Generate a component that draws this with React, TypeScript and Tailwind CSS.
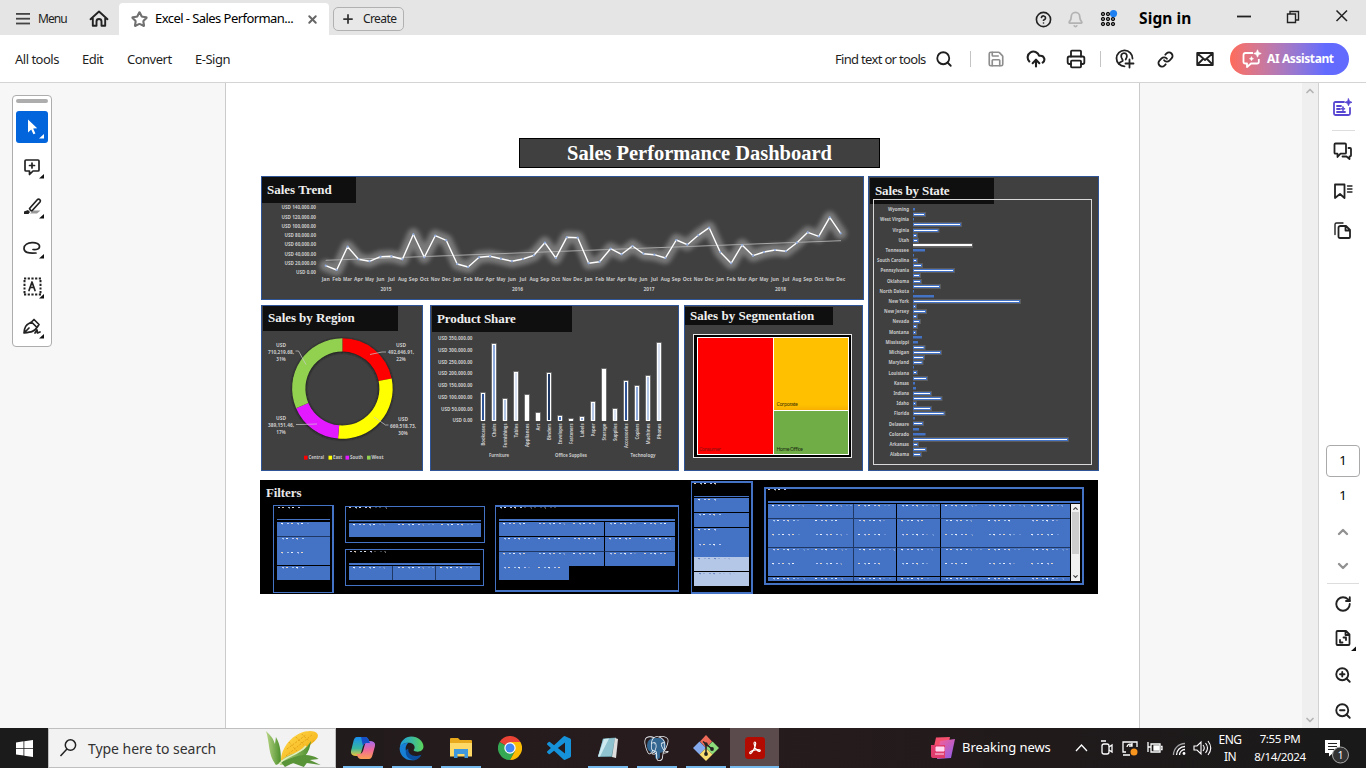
import React from "react";
import {
  Star, X, Plus, CircleHelp, Bell, Search, Save, CloudUpload, Printer, Link, ChevronUp, ChevronDown,
  ZoomIn, ZoomOut, RotateCw,
} from "lucide-react";
import { SiPostgresql } from "react-icons/si";

const UI = "font-['Noto_Sans',sans-serif]";
const SERIF = "font-['Liberation_Serif',serif] font-bold";

/* ------------------------------------------------ window chrome */

function AppsGrid() {
  const dots = [0, 1, 2].flatMap((r) => [0, 1, 2].map((c) => [c, r]));
  return (
    <svg width="18" height="18" viewBox="0 0 18 18">
      {dots.map(([c, r]) => (
        <circle key={`${c}${r}`} cx={3 + c * 5} cy={4 + r * 5} r="1.7" fill="#666" stroke="#111" strokeWidth="1" />
      ))}
      <circle cx="13.500" cy="3.600" r="3.600" fill="#1e80f0" />
    </svg>
  );
}

function TitleBar() {
  return (
    <div className="flex h-[35px] shrink-0 items-end bg-[#e5e5e5] text-[#222]">
      <div className="flex h-8 w-[119px] items-center pl-4">
        <svg width="14" height="12" viewBox="0 0 14 12" fill="#444">
          <rect y="0" width="14" height="1.8" /><rect y="4.8" width="14" height="1.8" /><rect y="9.6" width="14" height="1.8" />
        </svg>
        <span className="ml-2 w-[44px] text-[12px] tracking-[-0.9px]">Menu</span>
        <svg className="ml-[7px]" width="20" height="20" viewBox="0 0 20 20" fill="none" stroke="#222" strokeWidth="1.9" strokeLinejoin="round" strokeLinecap="round">
          <path d="M1.500 10.200 10 2.500l8.500 7.700M3.800 9v7.800h3.700v-4.300a2.500 2.500 0 0 1 5 0v4.300h3.700V9" />
        </svg>
      </div>
      <div className="flex h-8 w-[210px] items-center rounded-t-[4px] bg-white pl-3 text-black">
        <Star size={17} strokeWidth={3} color="#707070" />
        <span className="ml-[7px] w-[146px] whitespace-nowrap text-[13px] tracking-[-0.56px]">Excel - Sales Performan...</span>
        <X size={13} strokeWidth={3.600} color="#666" className="ml-[5px]" />
      </div>
      <div className="mb-1 ml-1 flex h-6 w-[71px] items-center rounded-[5px] border border-[#b1b1b1] bg-[#e8e8e8] pl-[7px]">
        <Plus size={14} strokeWidth={3} color="#333" />
        <span className="ml-2 text-[12px] tracking-[-0.6px]">Create</span>
      </div>
      <div className="ml-auto flex h-8 items-center">
        <CircleHelp size={17} strokeWidth={2.3} color="#222" />
        <Bell size={17} strokeWidth={2.5} color="#b3b3b3" className="ml-[15px]" />
        <span className="ml-4"><AppsGrid /></span>
        <span className="ml-[21px] w-[98px] whitespace-nowrap text-[15.5px] font-bold tracking-[0.1px] text-black">Sign in</span>
        <svg className="mb-1" width="129" height="16" viewBox="0 0 129 16" fill="none" stroke="#222">
          <path d="M0 7.500h14" strokeWidth="1.800" />
          <path d="M50.500 5h8v8.500h-8zM53 5V2.500h8.500v8.500H59" strokeWidth="1.400" />
          <path d="m99.500 1.500 10.500 10.500m0-10.500-10.500 10.500" strokeWidth="1.500" />
        </svg>
      </div>
    </div>
  );
}

function Slot({ children }: { children: React.ReactNode }) {
  return <span className="flex w-10 justify-center">{children}</span>;
}

function Toolbar() {
  return (
    <div className="flex h-12 shrink-0 items-center border-b border-[#d4d4d4] bg-white pl-[15px] pr-[17px] pt-px text-[13px] tracking-[-0.5px] text-[#1f1f1f]">
      <span className="w-[67px] pt-px">All tools</span>
      <span className="w-[45px] pt-px">Edit</span>
      <span className="w-[68px] pt-px">Convert</span>
      <span className="pt-px">E-Sign</span>
      <div className="ml-auto flex items-center">
        <span className="w-[91px] whitespace-nowrap pt-px tracking-[-0.68px]">Find text or tools</span>
        <span className="flex w-9 justify-center"><Search size={18} strokeWidth={2.4} /></span>
        <span className="ml-2 mr-[5px] h-4 w-px bg-[#c4c4c4]" />
        <Slot><Save size={18} strokeWidth={2.2} color="#8e8e8e" /></Slot>
        <Slot><CloudUpload size={20} strokeWidth={2.5} /></Slot>
        <Slot><Printer size={20} strokeWidth={2.2} /></Slot>
        <span className="mx-1 h-4 w-px bg-[#c4c4c4]" />
        <Slot>
          <svg width="20" height="20" viewBox="0 0 20 20" fill="none" stroke="#222" strokeWidth="1.8" strokeLinecap="round">
            <path d="M9.500 17.300A8 8 0 1 1 17.500 9.500" />
            <path d="M4 14.800c.6-1.600 2-2.100 3.300-2.600.6-.3.500-1 .1-1.600C5 7.200 6.300 4.200 9 4.200s4.100 2.800 1.700 6.400" />
            <path d="M14.500 10.500v8M10.500 14.500h8" />
          </svg>
        </Slot>
        <Slot><Link size={17} strokeWidth={2.6} /></Slot>
        <Slot>
          <svg width="18" height="16" viewBox="0 0 18 16" fill="none" stroke="#222" strokeWidth="1.8" strokeLinejoin="round">
            <path d="M1.200 2h15.600v12H1.200zM1.500 2.500 9 9l7.500-6.500M1.500 13.500 7 8m9.500 5.500L11 8" />
          </svg>
        </Slot>
        <div className="ml-[5px] flex h-8 w-[119px] items-center rounded-full bg-gradient-to-r from-[#ff6b58] to-[#636bff] to-80% pl-3 text-white">
          <svg width="20" height="20" viewBox="0 0 20 20" fill="none" stroke="#fff" strokeWidth="1.8" strokeLinejoin="round">
            <path d="M11 4H3.500Q1.500 4 1.500 6v7q0 1.500 2 1.500H5V18l4-3.500h6q1.800 0 1.800-1.800V10" />
            <path d="M15.500.8 16.500 3.500 19.200 4.500 16.500 5.500 15.500 8.200 14.500 5.500 11.800 4.500 14.500 3.500z" fill="#fff" strokeWidth=".8" />
            <path d="m9.500 7.500.7 1.500 1.500.7-1.500.7-.7 1.500-.7-1.500-1.500-.7 1.500-.7z" fill="#fff" strokeWidth=".4" />
          </svg>
          <span className="ml-[5px] whitespace-nowrap text-[12px] font-bold tracking-[-0.4px]">AI Assistant</span>
        </div>
      </div>
    </div>
  );
}

function Tool({ active, children }: { active?: boolean; children: React.ReactNode }) {
  return (
    <div className={active ? "h-8 w-8 rounded-[3px] bg-[#0265dc]" : "h-8 w-8"}>
      <svg width="32" height="32" viewBox="0 0 32 32" fill="none" stroke="#222" strokeWidth="1.7" strokeLinejoin="round" strokeLinecap="round">
        {children}
        <path d="M28 23v4.500h-5z" fill={active ? "#fff" : "#111"} stroke="none" />
      </svg>
    </div>
  );
}

function ToolPalette() {
  return (
    <div className="ml-3 mt-3 flex h-[252px] w-10 flex-col items-center gap-2 rounded-[4px] border border-[#adadad] bg-white pt-[3px]">
      <div className="h-1 w-8 rounded-full bg-[#adadad]" />
      <Tool active><path d="M12 8.500v13l3.200-3 2.200 4.800 2-.9-2.200-4.800 4-.3z" fill="#fff" stroke="none" /></Tool>
      <Tool><path d="M10 9h12q1 0 1 1v9q0 1-1 1h-5l-3.500 3.500V20H10q-1 0-1-1v-9q0-1 1-1zM16 12v5m-2.500-2.500h5" /></Tool>
      <Tool>
        <path d="M17 19.500h7.500l-3.500 3h-7z" fill="#999" stroke="none" />
        <path d="m13.500 17.500 8-9q1.200-.8 2.300.2 1.100 1.100.2 2.300L16 19.800q-1.500.5-2.500-2.300z" />
        <path d="m12 19-4 1.500v2.500h4.500l1.500-2z" fill="#222" stroke="none" />
      </Tool>
      <Tool><path d="M20 22q-12 1-12-4.500c0-7.500 16-7.500 15.500-2 0 4-6.500 3-6.500 3" /></Tool>
      <Tool>
        <path d="M8 7.500h17M8 23.500h17M8.500 9v14M24.500 9v14" strokeDasharray="2.200 1.500" strokeLinecap="butt" strokeWidth="2" />
        <path d="m13 19.500 3-8.500 3 8.500m-5-3h4" />
      </Tool>
      <Tool><path d="M8 22c.5-6 1.500-8 7.500-11l5.500 5.500c-3 4-5 4.500-13 5.500zm0 0 5-5M16 10.500l2-2 5 5-2 3M19 22l2-3 .5 3 2.500-1" /></Tool>
    </div>
  );
}

function RightRail() {
  const s = { fill: "none", stroke: "#222", strokeWidth: 1.8, strokeLinejoin: "round" as const, strokeLinecap: "round" as const };
  return (
    <div className="flex w-12 shrink-0 flex-col items-center border-l border-[#d2d2d2] bg-white pl-px">
      <svg className="mt-[15px] shrink-0" width="20" height="20" viewBox="0 0 20 20" {...s} stroke="#5746d2">
        <path d="M11 4H2.500Q1 4 1 5.500v10Q1 17 2.500 17h13q1.500 0 1.500-1.500V10M4 8h4m-4 3h3m-3 3h8" />
        <path d="m15.500.8 1 2.500 2.500 1-2.500 1-1 2.500-1-2.500-2.500-1 2.500-1zM10 8.700l.6 1.500 1.500.6-1.500.6-.6 1.500-.6-1.500-1.500-.6 1.500-.6z" fill="#5746d2" strokeWidth=".8" />
      </svg>
      <div className="mt-3 h-px w-[23px] shrink-0 bg-[#ddd]" />
      <svg className="mt-[11px] shrink-0" width="20" height="20" viewBox="0 0 20 20" {...s}>
        <path d="M1.500 2.500q0-1 1-1h9.500q1 0 1 1V11q0 .7-1 .7H7.500L4.500 15v-3.300h-2q-1 0-1-.7zM15.500 6h1.500q1 0 1 1v6.500q0 .8-1 .8h-.5V17L13.500 14.500H9.500" />
      </svg>
      <svg className="mt-5 shrink-0" width="20" height="20" viewBox="0 0 20 20" {...s}>
        <path d="M2 2.500h9.500V16L7 12l-5 4z" /><path d="M14.500 4H19m-4.500 3H19m-4.500 3H19" strokeWidth="1.300" />
      </svg>
      <svg className="mt-[19px] shrink-0" width="20" height="20" viewBox="0 0 20 20" {...s}>
        <path d="M2 13.500V3.500Q2 2 3.500 2H10" strokeWidth="1.400" /><path d="M7.500 5h5.500l4 4v7q0 1-1 1H7q-1.500 0-1.500-1.500V6.500Q5.500 5 7.500 5zM12.500 5.500V9.500h4" />
      </svg>
      <div className="mt-[204px] flex h-8 w-[34px] shrink-0 items-center justify-center rounded-[4px] border border-[#aaa] text-[13px]">1</div>
      <div className="mt-2 text-[13px] leading-[20px]">1</div>
      <ChevronUp size={16} strokeWidth={3.500} color="#919191" className="mt-[19px] shrink-0" />
      <ChevronDown size={16} strokeWidth={3.500} color="#919191" className="mt-[18px] shrink-0" />
      <div className="mt-[9px] h-px w-8 shrink-0 bg-[#ddd]" />
      <RotateCw size={18} strokeWidth={2.500} color="#222" className="mt-[11px] shrink-0" />
      <svg className="mt-4 shrink-0" width="26" height="22" viewBox="-4 0 26 22" {...s}>
        <path d="M3.500 2H12l3.500 3.500V15q0 1-1 1h-11q-1 0-1-1V3q0-1 1-1zM11.500 2v4h4M9.500 8.500h2.500v2.500M8.500 13.500H6v-2.500" /><path d="M22 17.500V22h-5z" fill="#111" stroke="none" />
      </svg>
      <ZoomIn size={18} strokeWidth={2.500} color="#222" className="mt-[15px] shrink-0" />
      <ZoomOut size={18} strokeWidth={2.500} color="#222" className="mt-[18px] shrink-0" />
    </div>
  );
}

/* ------------------------------------------------ dashboard */

const MONTHS = ["Jan", "Feb", "Mar", "Apr", "May", "Jun", "Jul", "Aug", "Sep", "Oct", "Nov", "Dec"];
const TREND = [
  265.7, 270, 246.7, 259.3, 261.3, 256.7, 256.3, 259.3, 234.3, 257.3, 235.7, 240.3,
  264, 267, 257.3, 256.3, 258.7, 261.3, 259, 255.3, 242.7, 258, 237.3, 237.7,
  263.3, 261.7, 248.7, 254.3, 246, 253.7, 254.7, 258, 240, 244.7, 235.3, 227.7,
  252, 263.3, 245, 255.7, 252, 250, 251.3, 242.7, 232.3, 236.3, 217.3, 233.3,
];
const px = (i: number) => 325.7 + i * 10.957;

function ChartText(p: React.SVGProps<SVGTextElement>) {
  return <text fontFamily="'Noto Sans', sans-serif" fontWeight="700" fontSize="5.5" fill="#c8c8c8" {...p} />;
}

function TrendChart() {
  const line = TREND.map((y, i) => `${px(i)},${y}`).join(" ");
  return (
    <svg className="block" width="601" height="96" viewBox="262 203 601 96">
      <defs><filter id="glow" x="-10%" y="-40%" width="120%" height="180%"><feGaussianBlur stdDeviation="1.9" /></filter></defs>
      {["140,000", "120,000", "100,000", "80,000", "60,000", "40,000", "20,000", "0"].map((v, i) => (
        <ChartText key={v} x="316" y={209.3 + i * 9.28} textAnchor="end" textLength={v === "0" ? 20 : v.length > 6 ? 34.500 : 31.5} lengthAdjust="spacingAndGlyphs">{`USD ${v}.00`}</ChartText>
      ))}
      <polyline points={line} fill="none" stroke="#8c8c8c" strokeOpacity=".75" strokeWidth="12" strokeLinejoin="round" strokeLinecap="round" filter="url(#glow)" />
      <path d="M325.700 260.300 841 240.700" stroke="#a8a8a8" strokeWidth="1" />
      <polyline points={line} fill="none" stroke="#fff" strokeWidth="1.400" strokeLinejoin="round" />
      {TREND.map((y, i) => <circle key={i} cx={px(i)} cy={y} r="1.1" fill="#8faadc" />)}
      {TREND.map((_, i) => <ChartText key={i} x={px(i)} y="281.400" textAnchor="middle" textLength={i % 12 === 5 || i % 12 === 0 ? 8 : i % 12 === 6 ? 6.800 : 9} lengthAdjust="spacingAndGlyphs">{MONTHS[i % 12]}</ChartText>)}
      {[2015, 2016, 2017, 2018].map((y, i) => <ChartText key={y} x={386 + i * 131.500} y="291.400" textAnchor="middle" textLength="11" lengthAdjust="spacingAndGlyphs">{y}</ChartText>)}
    </svg>
  );
}

const CX = 342.4, CY = 388.5;
function arc(a: number, b: number) {
  const p = (r: number, d: number) => `${CX + r * Math.sin((d * Math.PI) / 180)} ${CY - r * Math.cos((d * Math.PI) / 180)}`;
  return `M${p(50.3, a)}A50.3 50.3 0 0 1 ${p(50.3, b)}L${p(37, b)}A37 37 0 0 0 ${p(37, a)}Z`;
}
const REGIONS = [
  { n: "Central", c: "#ff0000", a: 0, b: 78.4, v: "492,646.91,", p: "22%", x: 401, y: 347, lx: 304, w: 15.5 },
  { n: "East", c: "#ffff00", a: 78.4, b: 185, v: "669,518.73,", p: "30%", x: 403, y: 421, lx: 328.5, w: 9 },
  { n: "South", c: "#e31aff", a: 185, b: 247, v: "389,151.46,", p: "17%", x: 281, y: 420, lx: 345.500, w: 13 },
  { n: "West", c: "#92d050", a: 247, b: 360, v: "710,219.68,", p: "31%", x: 281, y: 347, lx: 367, w: 12 },
];

function RegionChart() {
  return (
    <svg className="block" width="160" height="139" viewBox="262 331 160 139">
      <defs><filter id="soft"><feGaussianBlur stdDeviation="1.2" /></filter></defs>
      <circle cx={CX} cy={CY + 0.6} r="43.500" fill="none" stroke="#1a1a1a" strokeWidth="14" filter="url(#soft)" />
      {REGIONS.map((r) => <path key={r.n} d={arc(r.a, r.b)} fill={r.c} />)}
      <path d="M370 354.500 382 352h4M374 417l11.500 8h3M317 424l-16 .5h-5M306 364.500 298.500 351h-3" stroke="#ccc" strokeWidth=".7" fill="none" />
      {REGIONS.map((r) => (
        <g key={r.n}>
          <ChartText x={r.x} y={r.y} textAnchor="middle" textLength="10" lengthAdjust="spacingAndGlyphs">USD</ChartText>
          <ChartText x={r.x} y={r.y + 6.800} textAnchor="middle" textLength="26" lengthAdjust="spacingAndGlyphs">{r.v}</ChartText>
          <ChartText x={r.x} y={r.y + 13.500} textAnchor="middle" textLength="9.500" lengthAdjust="spacingAndGlyphs">{r.p}</ChartText>
          <rect x={r.lx} y="455.700" width="3.600" height="3.900" fill={r.c} />
          <ChartText x={r.lx + 4.500} y="459.400" textLength={r.w} lengthAdjust="spacingAndGlyphs">{r.n}</ChartText>
        </g>
      ))}
    </svg>
  );
}

/* name, top of the bar, fill, length of the label */
const PRODUCTS: [string, number, string, number][] = [
  ["Bookcases", 393, "#2f5597", 22], ["Chairs", 344, "#8faadc", 13.5], ["Furnishings", 399, "#b4c7e7", 24], ["Tables", 372, "#dae3f3", 14],
  ["Appliances", 395, "#ffffff", 23.5], ["Art", 413, "#ffffff", 7], ["Binders", 373, "#1f3864", 16.5], ["Envelopes", 416, "#4472c4", 21],
  ["Fasteners", 419, "#ffffff", 20.5], ["Labels", 417, "#8faadc", 13.5], ["Paper", 402, "#b4c7e7", 13], ["Storage", 369, "#ffffff", 17],
  ["Supplies", 409, "#dae3f3", 17.5], ["Accessories", 381, "#2f5597", 24.5], ["Copiers", 386, "#8faadc", 16], ["Machines", 376, "#b4c7e7", 21],
  ["Phones", 343, "#dae3f3", 15.5],
];

function ProductChart() {
  return (
    <svg className="block" width="247" height="138" viewBox="431 332 247 138">
      {["350,000", "300,000", "250,000", "200,000", "150,000", "100,000", "50,000", "0"].map((v, i) => (
        <ChartText key={v} x="472.500" y={340.2 + i * 11.740} textAnchor="end" textLength={v === "0" ? 20 : v.length > 6 ? 34.500 : 31.500} lengthAdjust="spacingAndGlyphs">{`USD ${v}.00`}</ChartText>
      ))}
      {PRODUCTS.map(([n, top, c, len], i) => {
        const x = Math.round(482.5 + i * 11.06);
        return (
          <g key={n}>
            <rect x={x - 3} y={top - 1} width="6" height={422 - top} rx="1" fill="#6e6e6e" />
            <rect x={x - 2} y={top} width="4" height={421 - top} fill="#fff" />
            <rect x={x - 1} y={top + 1} width="2" height={Math.max(0, 419 - top)} fill={c} />
            <ChartText transform={`translate(${x + 1.8} 423.500) rotate(-90)`} textAnchor="end" textLength={len} lengthAdjust="spacingAndGlyphs">{n}</ChartText>
          </g>
        );
      })}
      <ChartText x="499" y="457.400" textAnchor="middle" textLength="20" lengthAdjust="spacingAndGlyphs">Furniture</ChartText>
      <ChartText x="571" y="457.400" textAnchor="middle" textLength="32" lengthAdjust="spacingAndGlyphs">Office Supplies</ChartText>
      <ChartText x="643" y="457.400" textAnchor="middle" textLength="25" lengthAdjust="spacingAndGlyphs">Technology</ChartText>
    </svg>
  );
}

function SegmentChart() {
  return (
    <svg className="block" width="177" height="145" viewBox="685 325 177 145">
      <defs><linearGradient id="amb" x2="0" y2="1"><stop offset=".93" stopColor="#ffc000" /><stop offset="1" stopColor="#f8b000" /></linearGradient></defs>
      <rect x="693.500" y="334.500" width="158" height="123" fill="#000" stroke="#e8e8e8" />
      <rect x="697" y="337" width="152" height="118" fill="#fff" />
      <rect x="698" y="338" width="75" height="116" fill="#ff0000" />
      <rect x="774" y="338" width="74" height="72" fill="url(#amb)" />
      <rect x="774" y="411" width="74" height="43" fill="#70ad47" />
      <g fontFamily="'Noto Sans', sans-serif" fontSize="5.200">
        <text x="699" y="451.400" textLength="22" fill="#8a1010">Consumer</text>
        <text x="776.500" y="406.200" textLength="21.500" fill="#3c3000">Corporate</text>
        <text x="776.500" y="451.400" textLength="26.500" fill="#182810">Home Office</text>
      </g>
    </svg>
  );
}

const STATES = ["Wyoming", "West Virginia", "Virginia", "Utah", "Tennessee", "South Carolina", "Pennsylvania", "Oklahoma", "North Dakota", "New York", "New Jersey", "Nevada", "Montana", "Mississippi", "Michigan", "Maryland", "Louisiana", "Kansas", "Indiana", "Idaho", "Florida", "Delaware", "Colorado", "Arkansas", "Alabama"];
const STATE_LEN = [21, 29, 16.5, 10.5, 23.5, 32, 28.5, 22, 29.5, 20.5, 25, 16.5, 20, 23.5, 20, 20.5, 20.5, 15, 15.5, 12.5, 15, 20, 20, 19.5, 19];
const STATE_W = [
  2, 12, 1, 48, 25.5, 4, 5, 59, 12, 1, 4, 9, 41, 7, 8, 27, 1, 21, 107, 3, 13, 4, 7, 4, 3, 9, 5, 11.5, 28, 11, 9.5, 1, 4, 14, 2, 3,
  18, 28.5, 3, 18, 31.5, 2, 10, 6, 12.5, 155, 5, 13, 8,
];
const SOLID = new Set([0, 2, 8, 9, 16, 17, 25, 26, 31, 34, 35, 41, 43, 44]);
const TEXAS = 7;

function StateChart() {
  return (
    <svg className="-mt-[5px] block" width="229" height="271" viewBox="869 199 229 271">
      <rect x="873.500" y="199.500" width="218" height="265" fill="none" stroke="#d9d9d9" />
      {STATES.map((s, i) => <ChartText key={s} x="909" y={211.2 + i * 10.208} textAnchor="end" textLength={STATE_LEN[i]} lengthAdjust="spacingAndGlyphs">{s}</ChartText>)}
      {STATE_W.map((w, i) => {
        const y = Math.round(208.1 + i * 5.104);
        if (SOLID.has(i)) return <rect key={i} x="913" y={y} width={w} height="2.500" fill="#4472c4" />;
        return (
          <g key={i}>
            <rect x="913" y={y - 1} width={w + 1} height="5" fill="#5c5c5c" />
            <rect x="913" y={y} width={w} height="3" fill={i === TEXAS ? "#666" : "#4472c4"} />
            <rect x={i === TEXAS ? 913 : 914} y={i === TEXAS ? y : y + 1} width={Math.max(1, w - (i === TEXAS ? 0 : 2))} height={i === TEXAS ? 2 : 1} fill="#fff" />
          </g>
        );
      })}
    </svg>
  );
}

/* One-pixel-high ticks that stand for the labels of the shrunken slicers. */
function Ticks({ n, seed, light }: { n: number; seed: number; light?: boolean }) {
  const tones = light ? ["#5f7fc0", "#8fa6d4", "#7590ca"] : ["#ffffff", "#c9d4ff", "#f5dfc6", "#b4d4f4"];
  return (
    <svg className="block" width={n * 5} height="2" viewBox={`0 0 ${n * 5} 2`} shapeRendering="crispEdges">
      {Array.from({ length: n }, (_, i) => {
        const x = i * 5 + ((i * 3 + seed) % 2);
        return (
          <g key={i}>
            <rect x={x} y="0" width="2" height="1" fill={tones[(i + seed) % tones.length]} opacity={i > 4 ? 0.3 : 0.9} />
            {(i + seed) % 3 === 0 && <rect x={x + 1} y="1" width="1" height="1" fill={tones[(i + 1) % tones.length]} opacity=".4" />}
          </g>
        );
      })}
    </svg>
  );
}

type Row = { h: string; sep?: string; cells: number; light?: boolean; ticks: number };

function SlicerRows({ rows, cols, div }: { rows: Row[]; cols: string; div?: string[] }) {
  return (
    <>
      {rows.map((r, ri) => (
        <div key={ri} className={`grid ${cols} ${r.h}`}>
          {Array.from({ length: r.cells }, (_, ci) => (
            <div key={ci} className={`overflow-hidden pl-1 pt-px ${r.light ? "bg-[#b4c7e7]" : "bg-[#4472c4]"} ${r.sep ?? ""} ${div?.[ci] ?? ""}`}>
              <Ticks n={r.ticks + ((ri + ci) % 2)} seed={ri * 3 + ci} light={r.light} />
            </div>
          ))}
        </div>
      ))}
    </>
  );
}

const BLK = "border-b border-b-black";
const NAVY = "border-b border-b-[#1f3864]";
const V = "border-r border-r-black";
const VN = "border-r border-r-[#1f3864]";

function Filters() {
  return (
    <div className="-ml-px mt-[9px] flex h-[114px] w-[838px] bg-black">
      <div className="w-[431px] pl-[6px]">
        <div className={`${SERIF} h-[25px] pt-[5px] text-[13px] leading-4 tracking-[-0.1px] text-[#e8e8e8]`}>Filters</div>
        <div className="flex pl-[7px]">
          <div className="h-[88px] w-[61px] border border-r-2 border-[#4472c4] pl-[3px] pr-[2px] pt-px">
            <div className="h-3"><Ticks n={5} seed={1} /></div>
            <div className="mb-[2px] h-px bg-[#4472c4]" />
            <SlicerRows cols="grid-cols-1" rows={[
              { h: "h-[15px]", sep: NAVY, cells: 1, ticks: 6 }, { h: "h-[14px]", cells: 1, ticks: 4 },
              { h: "h-[15px]", sep: BLK, cells: 1, ticks: 5 }, { h: "h-[14px]", cells: 1, ticks: 4 }]} />
          </div>
          <div className="ml-[11px] mt-px flex w-[140px] flex-col gap-[6px]">
            <div className="h-[37px] border border-[#4472c4] px-[3px]">
              <div className="h-[13px]"><Ticks n={8} seed={2} /></div>
              <div className="h-px bg-[#4472c4]" />
              <div className="mb-px h-px bg-[#1f3864]" />
              <SlicerRows cols="grid-cols-3" rows={[{ h: "h-[14px]", cells: 3, ticks: 7 }]} />
            </div>
            <div className="h-[37px] w-[139px] border border-[#4472c4] px-[3px] pt-px">
              <div className="h-3"><Ticks n={8} seed={5} /></div>
              <div className="mb-px h-[2px] bg-[#4472c4]" />
              <SlicerRows cols="grid-cols-3" div={[VN, VN]} rows={[{ h: "h-[14px]", cells: 3, ticks: 7 }]} />
            </div>
          </div>
          <div className="ml-[10px] h-[87px] w-[184px] border border-y-[2px] border-[#4472c4] px-[3px]">
            <div className="h-3"><Ticks n={12} seed={3} /></div>
            <div className="mb-px h-[2px] bg-[#4472c4]" />
            <SlicerRows cols="grid-cols-5" div={["", "", V]} rows={[
              { h: "h-[15px]", sep: BLK, cells: 5, ticks: 5 }, { h: "h-[15px]", sep: NAVY, cells: 5, ticks: 5 },
              { h: "h-[14px]", cells: 5, ticks: 5 }, { h: "h-[14px]", cells: 2, ticks: 5 }]} />
          </div>
        </div>
      </div>
      <div className="mt-px h-[113px] w-[62px] border border-b-2 border-r-2 border-t-2 border-[#4472c4] px-[2px]">
        <div className="h-[13px]"><Ticks n={5} seed={2} /></div>
        <div className="mb-px h-px bg-[#4472c4]" />
        <SlicerRows cols="grid-cols-1" rows={[
          { h: "h-[15px]", sep: BLK, cells: 1, ticks: 4 }, { h: "h-[15px]", sep: BLK, cells: 1, ticks: 4 },
          { h: "h-[15px]", cells: 1, ticks: 4 }, { h: "h-[14px]", cells: 1, ticks: 4 },
          { h: "h-[15px]", sep: BLK, cells: 1, light: true, ticks: 7 }, { h: "h-[14px]", cells: 1, light: true, ticks: 7 }]} />
      </div>
      <div className="ml-[11px] mt-[7px] h-[98px] w-[320px] border-2 border-[#4472c4] px-[2px]">
        <div className="h-3"><Ticks n={4} seed={2} /></div>
        <div className="mb-px h-[2px] bg-[#4472c4]" />
        <div className="flex">
          <div className="h-[77px] w-[302px] overflow-hidden">
            <SlicerRows cols="grid-cols-7" div={["", VN, V, V]} rows={[
              { h: "h-[15px]", sep: NAVY, cells: 7, ticks: 7 }, { h: "h-[14px]", cells: 7, ticks: 5 },
              { h: "h-[15px]", sep: NAVY, cells: 7, ticks: 6 }, { h: "h-[14px]", cells: 7, ticks: 7 },
              { h: "h-[15px]", sep: BLK, cells: 7, ticks: 5 }, { h: "h-[4px]", cells: 7, ticks: 6 }]} />
          </div>
          <div className="ml-px flex h-[77px] w-[9px] flex-col items-center justify-between bg-[#f0f0f0] py-px">
            <ChevronUp size={7} strokeWidth={4} color="#444" />
            <div className="mb-auto h-[42px] w-[7px] bg-[#cdcdcd]" />
            <ChevronDown size={7} strokeWidth={4} color="#444" />
          </div>
        </div>
      </div>
    </div>
  );
}

const PANEL = "border border-[#2f5597] bg-[#404040]";
const HEAD = `${SERIF} whitespace-nowrap bg-[#0f0f0f] pl-[5px] text-[13px] text-[#efefef]`;

function Dashboard() {
  return (
    <div className="ml-[35px] w-[838px] pt-[55px]">
      <div className={`${SERIF} ml-[258px] flex h-[30px] w-[361px] items-center justify-center border border-black bg-[#404040] pt-px text-[20.5px] text-white`}>
        <span className="tracking-[-0.02px]">Sales Performance Dashboard</span>
      </div>
      <div className="mt-2 flex gap-1">
        <div className="w-[603px]">
          <div className={`${PANEL} h-[124px]`}>
            <div className={`${HEAD} h-[26px] w-[94px] leading-[26px]`}>Sales Trend</div>
            <TrendChart />
          </div>
          <div className="mt-[5px] flex">
            <div className={`${PANEL} h-[166px] w-[162px]`}>
              <div className={`${HEAD} ml-px h-[25px] w-[135px] leading-[24px] tracking-[-0.05px]`}>Sales by Region</div>
              <RegionChart />
            </div>
            <div className={`${PANEL} ml-[7px] h-[166px] w-[249px]`}>
              <div className={`${HEAD} ml-px h-[26px] w-[140px] leading-[26px] tracking-[-0.1px]`}>Product Share</div>
              <ProductChart />
            </div>
            <div className={`${PANEL} ml-[5px] h-[166px] w-[179px] pt-px`}>
              <div className={`${HEAD} h-[18px] w-[148px] leading-[18px]`}>Sales by Segmentation</div>
              <SegmentChart />
            </div>
          </div>
        </div>
        <div className={`${PANEL} h-[295px] w-[231px] pt-px`}>
          <div className={`${HEAD} ml-px h-[26px] w-[124px] leading-[26px] tracking-[-0.15px]`}>Sales by State</div>
          <StateChart />
        </div>
      </div>
      <Filters />
    </div>
  );
}

/* ------------------------------------------------ taskbar */

function TaskApp({ children, idle, active }: { children: React.ReactNode; idle?: boolean; active?: boolean }) {
  return (
    <div className={`flex h-10 w-[49px] flex-col items-center ${active ? "bg-[#5b4b4d]" : ""}`}>
      <div className="flex h-[38px] items-center pt-[2px]">{children}</div>
      <div className={`h-[2px] ${active ? "w-[49px]" : "w-10"} ${idle ? "" : "bg-[#76b9ed]"}`} />
    </div>
  );
}

function Corn() {
  return (
    <svg width="70" height="38" viewBox="0 0 70 38">
      <defs>
        <linearGradient id="corn" x1="0" x2="1" y1="0" y2="1"><stop stopColor="#ffdc50" /><stop offset="1" stopColor="#f2a608" /></linearGradient>
        <linearGradient id="leaf" x2="1"><stop stopColor="#b9d686" /><stop offset="1" stopColor="#4d8f2c" /></linearGradient>
      </defs>
      <path d="M11 36C3 26 5 15 1 2c5 5 7 7 9 13l1-7c5 9 5 17 5 26z" fill="url(#leaf)" />
      <path d="M16 31C17 15 32 2 45 2c8 0 11 5 5 10-8 8-20 12-29 23z" fill="url(#corn)" />
      <path d="m21 27 26-21M22 20 41 6M28 27 50 11M24 13l8 9m-1-14 8 8m-2-11 7 7" stroke="#dc9a14" strokeWidth=".8" strokeDasharray="2 1.500" />
      <path d="M15 36c4-15 23-7 31-24-1 15-11 24-31 24z" fill="url(#leaf)" />
      <path d="M16 33c14-5 25-11 38-3l-9 1 11 5-14-2-3 4-11-4-8 4z" fill="#5a9439" />
      <path d="M14 35c8-9 20-9 27-18" stroke="#e1efbd" fill="none" strokeWidth="1.500" />
    </svg>
  );
}

function Taskbar() {
  return (
    <div className="flex h-10 shrink-0 items-center bg-gradient-to-r from-[#1b1b1b] via-[#281b1d] to-[#191919] text-white">
      <div className="flex w-12 justify-center">
        <svg width="17" height="17" viewBox="0 0 17 17" fill="#fff"><path d="M0 2.400 7.500 1.300V8H0zM8.300 1.200 17 0v8H8.300zM0 8.800h7.500v6.800L0 14.500zM8.300 8.800H17V17l-8.700-1.200z" /></svg>
      </div>
      <div className="flex h-10 w-[288px] items-center border border-[#bfbfbf] bg-[#f2f2f2] pl-[10px] text-[#333]">
        <svg width="20" height="20" viewBox="0 0 20 20" fill="none" stroke="#222" strokeWidth="1.500"><circle cx="11.500" cy="7" r="5.200" /><path d="m8 11-6.500 7" /></svg>
        <span className="ml-[9px] w-[178px] whitespace-nowrap text-[14px] tracking-[-0.03px]">Type here to search</span>
        <Corn />
      </div>
      <div className="ml-[2px] flex">
        <TaskApp>
          <svg width="26" height="24" viewBox="0 0 26 24">
            <defs>
              <linearGradient id="cp1" x2="0" y2="1"><stop stopColor="#1a8df0" /><stop offset=".6" stopColor="#36b7a0" /><stop offset="1" stopColor="#f5c535" /></linearGradient>
              <linearGradient id="cp2" x2="0" y2="1"><stop stopColor="#a56af0" /><stop offset=".5" stopColor="#f06a9a" /><stop offset="1" stopColor="#fba052" /></linearGradient>
            </defs>
            <path d="M7 1h8q3 0 4 4l1 2h-4q-2 0-3 3l-2 7q-1 3-4 3-7 0-6-5l2.500-10Q4.500 1 7 1z" fill="url(#cp1)" />
            <path d="M19 23h-8q-3 0-4-4l-1-1h4q2 0 3-3l2-7q1-3 4-3 7 0 6 5l-2.500 9Q21.500 23 19 23z" fill="url(#cp2)" />
            <path d="M11 1h4q3 0 4 4l1 2h-4q-2 0-3 3z" fill="#174fc6" />
          </svg>
        </TaskApp>
        <TaskApp>
          <svg width="25" height="25" viewBox="0 0 24 24">
            <defs><linearGradient id="ed" x2="1"><stop stopColor="#1c9be0" /><stop offset="1" stopColor="#5bd65a" /></linearGradient></defs>
            <path d="M1 11C1 5 6 .5 12 .5S23.500 5 23.500 10c0 3-2.500 5-5.500 5-2 0-4-.5-4-1.500 0-.5 1-1 1-2.500C15 8.500 12.500 6.500 9 6.500 5 6.500 2 8 1 11z" fill="url(#ed)" />
            <path d="M.6 12c0-3.500 4-5.500 8.400-5.500-2 2-3 4-2.500 7 .6 5 5 8.500 9 9.500C7 25 .6 19 .6 12z" fill="#1780d4" />
            <path d="M9 12c-1 5 4 8 9 7 2-.3 3-1.200 3.500-1-1.500 3-4 5-7 5.300-6-.5-9-5.300-7.700-9.800Q7.500 12.500 9 12z" fill="#0c4e9e" />
          </svg>
        </TaskApp>
        <TaskApp>
          <svg width="24" height="22" viewBox="0 0 24 22"><path d="M1 2q0-1 1-1h7l2 2h11q1 0 1 1v15H1z" fill="#e8a91c" /><path d="M1 6h22v13.500H1z" fill="#ffd965" /><path d="M5 12h14v9h-3.500v-4h-7v4H5z" fill="#3f97dc" /></svg>
        </TaskApp>
        <TaskApp idle>
          <svg width="24" height="24" viewBox="0 0 24 24">
            <path d="M12 12 1.600 6A12 12 0 0 1 22.400 6z" fill="#ea4335" /><path d="M12 12h0L1.600 6A12 12 0 0 0 12 24l5-9z" fill="#34a853" />
            <path d="M12 6h10.400A12 12 0 0 1 12 24l5-9z" fill="#fbbc05" /><circle cx="12" cy="12" r="5.700" fill="#fff" /><circle cx="12" cy="12" r="4.500" fill="#4285f4" />
          </svg>
        </TaskApp>
        <TaskApp idle>
          <svg width="24" height="24" viewBox="0 0 24 24"><path fill="#1592d9" d="M23.150 2.587L18.210.210a1.494 1.494 0 0 0-1.705.290l-9.460 8.630-4.120-3.128a.999.999 0 0 0-1.276.057L.327 7.261A1 1 0 0 0 .326 8.740L3.899 12 .326 15.260a1 1 0 0 0 .001 1.479L1.650 17.940a.999.999 0 0 0 1.276.057l4.120-3.128 9.460 8.630a1.492 1.492 0 0 0 1.704.290l4.942-2.377A1.500 1.500 0 0 0 24 20.060V3.939a1.500 1.500 0 0 0-.850-1.352zm-5.146 14.861L10.826 12l7.178-5.448v10.896z" /></svg>
        </TaskApp>
        <TaskApp>
          <svg width="24" height="24" viewBox="0 0 24 24"><path d="M7 2.500 20 1.500 17.500 21 2 21z" fill="#5d8791" /><path d="M7 3 19 2 15.500 20 2 20.500z" fill="#8fc3d0" /><path d="m8 3 5-.4L4 20.500H2z" fill="#cdeaf0" /><path d="m19 2 3 1-2 19-4-1z" fill="#dedede" /></svg>
        </TaskApp>
        <TaskApp>
          <span className="relative flex h-[25px] w-[25px]">
            <span className="absolute left-[3px] top-[2px] h-[15px] w-[19px] rounded-[7px] bg-[#336791]" />
            <span className="absolute left-[11px] top-[12px] h-[11px] w-[5px] rounded-b bg-[#336791]" />
            <SiPostgresql size={25} color="#eef3f8" className="relative" />
          </span>
        </TaskApp>
        <TaskApp>
          <svg width="26" height="26" viewBox="0 0 26 26">
            <path d="M13 0 19 6.500 13 13 7 6.500z" fill="#ee6a58" /><path d="M6.500 6.500 13 13l-6.500 6.500L0 13z" fill="#84a9ec" /><path d="m19.500 6.500 6.500 6.500-6.500 6.500L13 13z" fill="#8cdc7c" /><path d="m13 13 6.500 6.500L13 26l-6.500-6.500z" fill="#f7dc70" />
            <path d="M10 6.500 13 9v10m0-10 6 5" stroke="#222" strokeWidth="1.500" fill="none" /><g fill="#222"><circle cx="13" cy="9" r="1.700" /><circle cx="13" cy="19" r="1.900" /><circle cx="19" cy="14" r="1.900" /></g>
          </svg>
        </TaskApp>
        <TaskApp active>
          <svg width="20" height="22" viewBox="0 0 20 22"><rect width="20" height="22" rx="3.500" fill="#b30b00" /><path d="M5 16.500c-1.500-1.500 2.500-3.300 5.500-3.700 3.500-.6 5.500.2 4.500 1.300-1.500 1.500-5.500-2.500-6-7.600 0-2 1.700-2 1.700 0C10.700 10 6.500 17.500 5 16.500z" stroke="#fff" strokeWidth="1.200" fill="none" /></svg>
        </TaskApp>
      </div>
      <div className="ml-auto flex items-center">
        <svg width="26" height="24" viewBox="0 0 26 24">
          <defs><linearGradient id="nw" x2="1" y2="1"><stop stopColor="#ff5f8e" /><stop offset="1" stopColor="#8a5cf0" /></linearGradient></defs>
          <path d="M6 1.500 20 1l-3 14H3z" fill="#f4506e" /><path d="m10 5 15-2-4 19-14 1z" fill="url(#nw)" /><path d="M1 9h14v13H3q-2 0-2-2z" fill="#e03c6c" /><path d="M6 11h8v4H6zM5 18h9" fill="#ffd7f0" stroke="#ffd7f0" />
        </svg>
        <span className="ml-[6px] w-[113px] whitespace-nowrap text-[13px] tracking-[-0.05px]">Breaking news</span>
        <svg width="138" height="20" viewBox="0 0 138 20" fill="none" stroke="#fff" strokeWidth="1.300">
          <path d="m1 13 5.500-6 5.500 6" />
          <rect x="27" y="6" width="7" height="10" rx="2" /><path d="m34 9 3-2v7l-3-2M26 3h5" />
          <path d="M51 14H48V4h14v5M48 17h7" /><path d="M52 9a3 3 0 0 1 5-2m0-2v3h-3" /><circle cx="59" cy="14" r="3.500" fill="#f7941d" stroke="none" />
          <path d="M76 6h9v8H76zM86 8.500h1v3h-1M73 4v5h3M73 9v5" /><path d="M79 8h5v4h-5z" fill="#fff" />
          <path d="M98.500 17A11.500 11.500 0 0 1 110 5.500" opacity=".6" /><path d="M101.500 17a8.500 8.500 0 0 1 8.500-8.500M104.500 17a5.500 5.500 0 0 1 5.500-5.500" /><circle cx="109" cy="15.500" r="1.400" fill="#fff" stroke="none" />
          <path d="M119 8h3l4-4v12l-4-4h-3zM128 7q2.500 3 0 6M130.500 5q4 5 0 10M133 3q5.500 7 0 14" strokeWidth="1.100" />
        </svg>
        <div className="ml-px w-8 text-center text-[12px] leading-[17px] tracking-[-0.500px]">ENG<br />IN</div>
        <div className="mr-[2px] w-[68px] whitespace-nowrap text-center text-[11.500px] leading-[18px] tracking-[-0.350px]">7:55 PM<br />8/14/2024</div>
        <svg className="ml-[7px] mr-[17px] mt-[8px]" width="26" height="24" viewBox="0 0 26 24">
          <path d="M2 0h15v13h-7l-4 3.500V13H2z" fill="#fff" /><path d="M5 3.500h9M5 6.500h9M5 9.500h6" stroke="#222" /><circle cx="17.500" cy="15" r="8" fill="#333" stroke="#aaa" />
          <text x="17.500" y="18.500" textAnchor="middle" fontFamily="'Noto Sans',sans-serif" fontSize="10" fill="#fff">1</text>
        </svg>
      </div>
    </div>
  );
}

export default function App() {
  return (
    <div className={`${UI} flex h-[768px] w-[1366px] flex-col overflow-hidden bg-[#f7f7f7]`}>
      <TitleBar />
      <Toolbar />
      <div className="flex min-h-0 flex-1">
        <div className="w-[225px] shrink-0"><ToolPalette /></div>
        <div className="w-[915px] shrink-0 border-x border-[#cbcbcb] bg-white"><Dashboard /></div>
        <div className="flex-1" />
        <div className="flex w-4 shrink-0 flex-col items-center justify-between bg-[#efefef] py-[2px]">
          <ChevronUp size={12} strokeWidth={3.500} color="#b5b5b5" />
          <ChevronDown size={12} strokeWidth={3.500} color="#b5b5b5" />
        </div>
        <RightRail />
      </div>
      <Taskbar />
    </div>
  );
}
